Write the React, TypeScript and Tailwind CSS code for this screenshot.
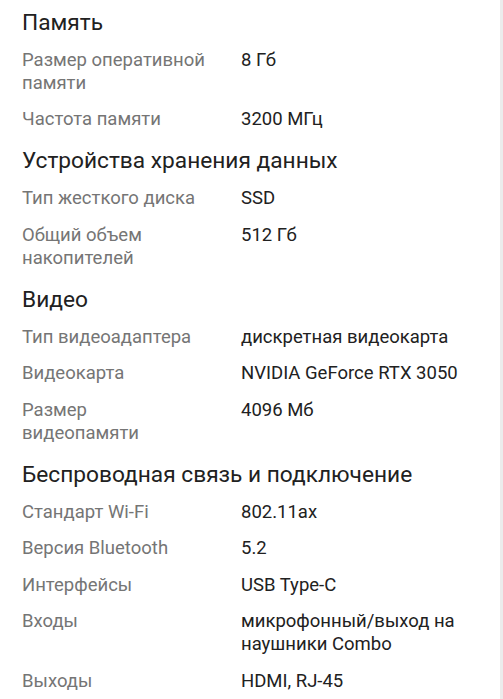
const sections = [
  {
    title: "Память",
    rows: [
      ["Размер оперативной памяти", "8 Гб"],
      ["Частота памяти", "3200 МГц"],
    ],
  },
  {
    title: "Устройства хранения данных",
    rows: [
      ["Тип жесткого диска", "SSD"],
      ["Общий объем накопителей", "512 Гб"],
    ],
  },
  {
    title: "Видео",
    rows: [
      ["Тип видеоадаптера", "дискретная видеокарта"],
      ["Видеокарта", "NVIDIA GeForce RTX 3050"],
      ["Размер видеопамяти", "4096 Мб"],
    ],
  },
  {
    title: "Беспроводная связь и подключение",
    rows: [
      ["Стандарт Wi-Fi", "802.11ax"],
      ["Версия Bluetooth", "5.2"],
      ["Интерфейсы", "USB Type-C"],
      ["Входы", "микрофонный/выход на наушники Combo"],
      ["Выходы", "HDMI, RJ-45"],
    ],
  },
];

export default function App() {
  return (
    <div className="h-[699px] overflow-hidden bg-white border-r-[3px] border-[#ececec] font-['Roboto',sans-serif]">
      <div className="pl-[22px] pr-[19px] pt-[6.5px]">
        {sections.map((s) => (
          <section key={s.title} className="pb-[0.5px]">
            <h2 className="text-[22.7px] leading-[31px] text-[#212121] mb-[11px]">
              {s.title}
            </h2>
            {s.rows.map(([label, value]) => (
              <div key={label} className="flex pb-[13.5px] text-[18.5px] leading-[23px]">
                <div className="w-[185px] shrink-0 text-[#757575]">{label}</div>
                <div className="ml-[34px] text-[#212121]">{value}</div>
              </div>
            ))}
          </section>
        ))}
      </div>
    </div>
  );
}
